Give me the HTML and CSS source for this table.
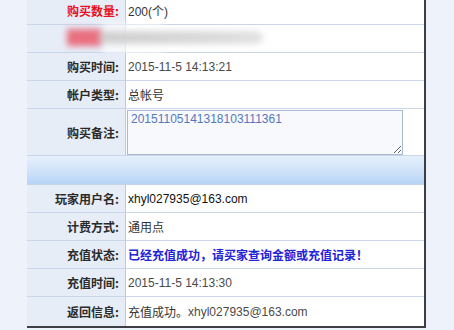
FILE: index.html
```html
<!DOCTYPE html>
<html lang="zh-CN">
<head>
<meta charset="utf-8">
<title>订单详情</title>
<link rel="stylesheet" href="styles.css">
</head>
<body>
<div class="panel">
  <div class="row">
    <div class="label label-red">购买数量:</div>
    <div class="value">200(个)</div>
  </div>
  <div class="row row-blur">
    <div class="label"></div>
    <div class="value"></div>
    <div class="blur">
      <span class="blur-veil"></span>
      <span class="blur-red"></span>
      <span class="blur-gray"></span>
    </div>
  </div>
  <div class="row">
    <div class="label">购买时间:</div>
    <div class="value gray">2015-11-5 14:13:21</div>
  </div>
  <div class="row">
    <div class="label">帐户类型:</div>
    <div class="value">总帐号</div>
  </div>
  <div class="row row-tall">
    <div class="label">购买备注:</div>
    <div class="value value-area">
      <textarea class="note" readonly>20151105141318103111361</textarea>
    </div>
  </div>
  <div class="band"></div>
  <div class="row">
    <div class="label">玩家用户名:</div>
    <div class="value dark">xhyl027935@163.com</div>
  </div>
  <div class="row">
    <div class="label">计费方式:</div>
    <div class="value">通用点</div>
  </div>
  <div class="row">
    <div class="label">充值状态:</div>
    <div class="value status">已经充值成功，请买家查询金额或充值记录！</div>
  </div>
  <div class="row">
    <div class="label">充值时间:</div>
    <div class="value gray">2015-11-5 14:13:30</div>
  </div>
  <div class="row row-last">
    <div class="label">返回信息:</div>
    <div class="value">充值成功。<span class="gray">xhyl027935@163.com</span></div>
  </div>
</div>
</body>
</html>
```
FILE: styles.css
```css
html, body {
  margin: 0;
  padding: 0;
}
body {
  background: #eef2fa;
  font-family: "Liberation Sans", "Noto Sans CJK SC", sans-serif;
  font-size: 12px;
  color: #333;
  overflow: hidden;
}
.panel {
  margin: -3px 0 0 27px;
  width: 397px;
  border-right: 2px solid #3d3f44;
  border-bottom: 2px solid #3d3f44;
  background: #fff;
}
.row {
  position: relative;
  display: grid;
  grid-template-columns: 99px 1fr;
  height: 27px;
  border-bottom: 1px solid #c9d6ea;
}
.row-tall {
  height: 46px;
}
.row-last {
  border-bottom: none;
  height: 29px;
}
.label {
  background: #e7edf7;
  border-right: 1px solid #b9cbe3;
  display: flex;
  align-items: center;
  justify-content: flex-end;
  padding-right: 6px;
  font-family: "Noto Sans CJK SC", sans-serif;
  font-weight: bold;
  color: #2a2a2a;
}
.label-red {
  color: #e8111d;
}
.value {
  display: flex;
  align-items: center;
  padding-left: 2px;
  color: #333;
  white-space: nowrap;
}
.value-area {
  align-items: stretch;
  padding: 1px 0 0 1px;
}
.gray {
  color: #4a4a4a;
}
.dark {
  color: #111;
}
.status {
  color: #2222d6;
  font-family: "Noto Sans CJK SC", sans-serif;
  font-weight: bold;
}
.note {
  width: 276px;
  height: 45px;
  margin: 0;
  box-sizing: border-box;
  border: 1px solid #aab9d0;
  background: #f7f9fd;
  color: #5577bb;
  font-family: "Liberation Sans", sans-serif;
  font-size: 12px;
  padding: 1px 3px;
  resize: both;
}
.band {
  height: 28px;
  border-bottom: 1px solid #c4d3e8;
  background: linear-gradient(#e6f0fc, #cfe2f9 55%, #b6d4f7);
}
.blur {
  position: absolute;
  left: 36px;
  top: -2px;
  width: 220px;
  height: 31px;
  filter: blur(3px);
}
.blur-veil {
  position: absolute;
  left: 40px;
  top: 0;
  width: 60px;
  height: 31px;
  background: rgba(255, 255, 255, 0.7);
}
.blur-red {
  position: absolute;
  left: 4px;
  top: 6px;
  width: 34px;
  height: 17px;
  background: #e96f7e;
}
.blur-gray {
  position: absolute;
  left: 36px;
  top: 8px;
  width: 164px;
  height: 13px;
  background: linear-gradient(90deg, #cfcfcf, #d8d8d8 60%, #e2e2e2);
  border-radius: 7px;
}
```
